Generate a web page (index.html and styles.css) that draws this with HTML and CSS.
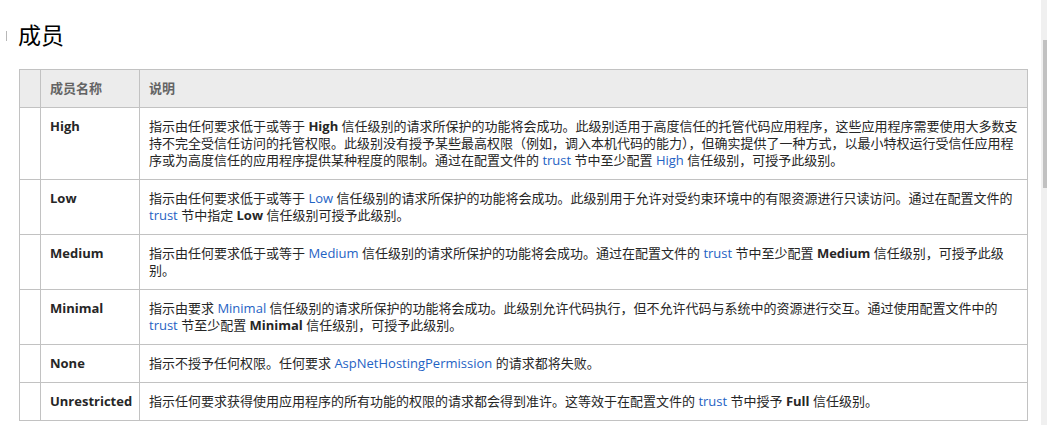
FILE: index.html
```html
<!DOCTYPE html>
<html lang="zh-CN">
<head>
<meta charset="utf-8">
<title>成员</title>
<link rel="stylesheet" href="styles.css">
</head>
<body>
<div class="page">
  <div class="content">
    <h2 class="title"><span class="mark"></span>成员</h2>
    <table class="members">
      <thead>
        <tr><th class="c-icon"></th><th class="c-name">成员名称</th><th class="c-desc">说明</th></tr>
      </thead>
      <tbody>
        <tr><td></td><td class="name">High</td><td>指示由任何要求低于或等于 <b>High</b> 信任级别的请求所保护的功能将会成功。此级别适用于高度信任的托管代码应用程序，这些应用程序需要使用大多数支持不完全受信任访问的托管权限。此级别没有授予某些最高权限（例如，调入本机代码的能力），但确实提供了一种方式，以最小特权运行受信任应用程序或为高度信任的应用程序提供某种程度的限制。通过在配置文件的 <a href="#">trust</a> 节中至少配置 <a href="#">High</a> 信任级别，可授予此级别。</td></tr>
        <tr><td></td><td class="name">Low</td><td>指示由任何要求低于或等于 <a href="#">Low</a> 信任级别的请求所保护的功能将会成功。此级别用于允许对受约束环境中的有限资源进行只读访问。通过在配置文件的 <a href="#">trust</a> 节中指定 <b>Low</b> 信任级别可授予此级别。</td></tr>
        <tr><td></td><td class="name">Medium</td><td>指示由任何要求低于或等于 <a href="#">Medium</a> 信任级别的请求所保护的功能将会成功。通过在配置文件的 <a href="#">trust</a> 节中至少配置 <b>Medium</b> 信任级别，可授予此级别。</td></tr>
        <tr><td></td><td class="name">Minimal</td><td>指示由要求 <a href="#">Minimal</a> 信任级别的请求所保护的功能将会成功。此级别允许代码执行，但不允许代码与系统中的资源进行交互。通过使用配置文件中的 <a href="#">trust</a> 节至少配置 <b>Minimal</b> 信任级别，可授予此级别。</td></tr>
        <tr><td></td><td class="name">None</td><td>指示不授予任何权限。任何要求 <a href="#">AspNetHostingPermission</a> 的请求都将失败。</td></tr>
        <tr><td></td><td class="name">Unrestricted</td><td>指示任何要求获得使用应用程序的所有功能的权限的请求都会得到准许。这等效于在配置文件的 <a href="#">trust</a> 节中授予 <b>Full</b> 信任级别。</td></tr>
      </tbody>
    </table>
  </div>
  <div class="scrollbar"><div class="thumb"></div></div>
</div>
</body>
</html>
```
FILE: styles.css
```css
html, body {
  margin: 0;
  padding: 0;
  background: #ffffff;
}
body {
  font-family: "Open Sans", "Noto Sans CJK SC", sans-serif;
  color: #262626;
  font-size: 13px;
}
.page {
  display: flex;
  height: 425px;
  overflow: hidden;
}
.content {
  flex: 1;
  padding: 0 13px 0 19px;
}
.title {
  position: relative;
  margin: 20px 0 20px -1px;
  font-size: 23px;
  line-height: 29px;
  font-weight: normal;
  color: #000;
  font-family: "Noto Sans CJK SC", sans-serif;
}
.mark {
  position: absolute;
  left: -12px;
  top: 11px;
  width: 1px;
  height: 10px;
  background: #b8b8b8;
}
.members {
  width: 1009px;
  border-collapse: collapse;
  table-layout: fixed;
}
.members th,
.members td {
  border: 1px solid #c2c2c2;
  padding: 10px 5px 10px 9px;
  line-height: 17px;
  vertical-align: top;
  text-align: left;
}
.members th {
  background: #ececec;
  color: #646464;
  font-weight: bold;
  font-size: 13px;
}
.c-icon { width: 6px; }
.c-name { width: 84px; }
.members td.name {
  font-weight: bold;
  color: #262626;
}
.members b {
  font-weight: bold;
  color: #262626;
}
.members a {
  color: #1f63c4;
  text-decoration: none;
}
.scrollbar {
  width: 6px;
  flex: none;
  background: #f0f0f0;
  padding-top: 40px;
  box-sizing: border-box;
  display: flex;
  justify-content: flex-end;
}
.thumb {
  width: 4px;
  height: 148px;
  background: #c1c1c1;
}
```
